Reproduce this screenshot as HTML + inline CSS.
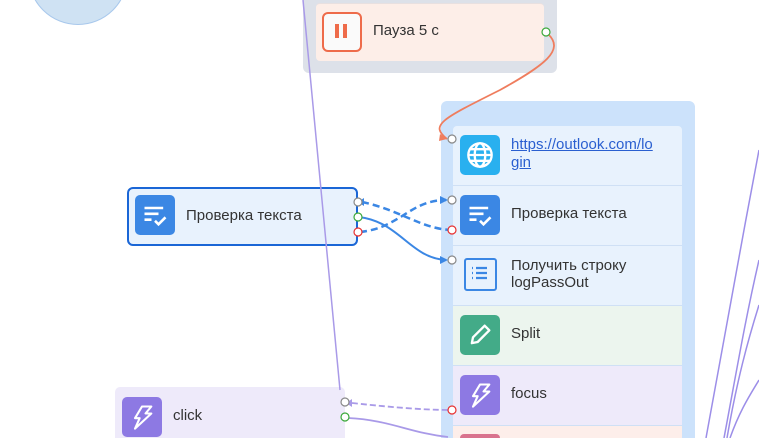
<!DOCTYPE html>
<html style="width:759px;height:438px;overflow:hidden"><head><meta charset="utf-8"><style>
html,body{margin:0;width:759px;height:438px;overflow:hidden}
body{background:#fff;font-family:"Liberation Sans","DejaVu Sans",sans-serif;position:relative}
.a{position:absolute}
.t{position:absolute;font-size:15px;color:#333}
.ic{position:absolute;width:40px;height:40px;border-radius:5px}
.row{position:absolute;left:453px;width:229px;height:59px;border-bottom:1px solid #cfe0f5}
</style></head><body>
<div class="a" style="left:28px;top:-75px;width:98px;height:98px;border-radius:50%;background:#cfe2f3;border:1px solid #a8c8ec"></div>

<div class="a" style="left:303px;top:0;width:254px;height:73px;border-radius:0 0 6px 6px;background:#dde1e9"></div>
<div class="a" style="left:316px;top:3px;width:228px;height:57px;border-radius:4px;background:#fdeee8;border-top:1px solid #e8e0e0"></div>
<div class="a" style="left:322px;top:12px;width:36px;height:36px;border:2px solid #ee6b4a;border-radius:6px;background:#fafafa"></div>
<div class="a" style="left:335px;top:24px;width:4px;height:14px;background:#ee6b4a"></div>
<div class="a" style="left:343px;top:24px;width:4px;height:14px;background:#ee6b4a"></div>
<div class="t" style="left:373px;top:22px">Пауза 5 с</div>

<div class="a" style="left:441px;top:101px;width:254px;height:337px;border-radius:6px 6px 0 0;background:#cce2fb"></div>
<div class="row" style="top:126px;background:#e8f2fd;border-radius:4px 4px 0 0"></div>
<div class="row" style="top:186px;background:#e8f2fd"></div>
<div class="row" style="top:246px;background:#e8f2fd"></div>
<div class="row" style="top:306px;background:#ecf5ee"></div>
<div class="row" style="top:366px;background:#eeeafa"></div>
<div class="row" style="top:426px;height:12px;border-bottom:0;background:#fdeeea"></div>

<div class="ic" style="left:460px;top:135px;background:#29b0ef"></div>
<svg class="a" style="left:466px;top:141px" width="28" height="28" viewBox="0 0 24 24" fill="none" stroke="#fff" stroke-width="2"><circle cx="12" cy="12" r="10"/><ellipse cx="12" cy="12" rx="4.5" ry="10"/><path d="M2 12h20M4 7h16M4 17h16"/></svg>
<div class="t" style="left:511px;top:136px;color:#2a5fd0;text-decoration:underline;line-height:18px">https://outlook.com/lo<br>gin</div>

<div class="ic" style="left:460px;top:195px;background:#3b87e4"></div>
<svg class="a" style="left:466px;top:201px" width="28" height="28" viewBox="0 0 24 24" fill="none" stroke="#fff" stroke-width="2.2"><path d="M3 6h16M3 11h12M3 16h6M12 17l3 3 6-6"/></svg>
<div class="t" style="left:511px;top:205px">Проверка текста</div>

<div class="a" style="left:464px;top:258px;width:29px;height:29px;border:2px solid #3b87e4;border-radius:3px"></div>
<svg class="a" style="left:468px;top:262px" width="24" height="24" viewBox="0 0 24 24" fill="none" stroke="#3b87e4" stroke-width="2.2"><path d="M4 6h1M4 11h1M4 16h1M8 6h11M8 11h11M8 16h11"/></svg>
<div class="t" style="left:511px;top:257px;line-height:17px">Получить строку<br>logPassOut</div>

<div class="ic" style="left:460px;top:315px;background:#43ab88"></div>
<svg class="a" style="left:466px;top:321px" width="28" height="28" viewBox="0 0 24 24" fill="none" stroke="#fff" stroke-width="2" stroke-linejoin="round"><path d="M5 19l1-5L16 4l4 4L10 18z"/></svg>
<div class="t" style="left:511px;top:325px">Split</div>

<div class="ic" style="left:460px;top:375px;background:#8d79e3"></div>
<svg class="a" style="left:466px;top:381px" width="28" height="28" viewBox="0 0 24 24" fill="none" stroke="#fff" stroke-width="1.8" stroke-linejoin="round"><path d="M12 3h8l-5 6h5L6 22l4-9H6z"/></svg>
<div class="t" style="left:511px;top:385px">focus</div>
<div class="a" style="left:460px;top:434px;width:40px;height:4px;border-radius:5px 5px 0 0;background:#d9738e"></div>

<div class="a" style="left:127px;top:187px;width:227px;height:55px;border:2px solid #1a66d6;border-radius:6px;background:#e8f2fd"></div>
<div class="ic" style="left:135px;top:195px;background:#3b87e4"></div>
<svg class="a" style="left:141px;top:201px" width="28" height="28" viewBox="0 0 24 24" fill="none" stroke="#fff" stroke-width="2.2"><path d="M3 6h16M3 11h12M3 16h6M12 17l3 3 6-6"/></svg>
<div class="t" style="left:186px;top:207px">Проверка текста</div>

<div class="a" style="left:115px;top:387px;width:230px;height:51px;border-radius:5px 5px 0 0;background:#eeeafa"></div>
<div class="ic" style="left:122px;top:397px;background:#8d79e3"></div>
<svg class="a" style="left:128px;top:403px" width="28" height="28" viewBox="0 0 24 24" fill="none" stroke="#fff" stroke-width="1.8" stroke-linejoin="round"><path d="M12 3h8l-5 6h5L6 22l4-9H6z"/></svg>
<div class="t" style="left:173px;top:407px">click</div>

<svg class="a" style="left:0;top:0" width="759" height="438" fill="none">
<path d="M303 0 L340 390" stroke="#a99ae8" stroke-width="1.5"/>
<path d="M706 438 C720 360 740 250 759 150 M724 438 C735 380 745 320 759 260 M727 438 C737 380 748 340 759 305 M730 438 C740 410 750 395 759 380" stroke="#9c8ee8" stroke-width="1.5"/>
<path d="M548 34 C565 50 545 65 500 90 C440 120 430 125 447 139" stroke="#ef7d5e" stroke-width="1.8"/>
<path d="M440 134 l7 5 -8 2z" fill="#ef7d5e"/>
<path d="M362 202 C400 210 420 228 450 230 M360 232 C400 228 410 200 446 200" stroke="#3b87e4" stroke-width="2.5" stroke-dasharray="7 4"/>
<path d="M359 217 C400 222 410 258 446 260" stroke="#3b87e4" stroke-width="2"/>
<path d="M440 196 l8 4 -8 4z M364 198 l-6 4 6 4z M440 256 l8 4 -8 4z" fill="#3b87e4"/>
<path d="M352 403 C380 406 420 410 450 410" stroke="#a99ae8" stroke-width="1.8" stroke-dasharray="6 3"/>
<path d="M352 399 l-6 4 6 4z" fill="#a99ae8"/>
<path d="M348 418 C390 420 410 433 448 437" stroke="#a99ae8" stroke-width="1.8"/>
<g stroke-width="1.2" fill="#fff">
<circle cx="546" cy="32" r="4" stroke="#3aa83a"/>
<circle cx="452" cy="139" r="4" stroke="#888"/>
<circle cx="452" cy="200" r="4" stroke="#888"/>
<circle cx="452" cy="230" r="4" stroke="#e83030"/>
<circle cx="452" cy="260" r="4" stroke="#888"/>
<circle cx="452" cy="410" r="4" stroke="#e83030"/>
<circle cx="358" cy="202" r="4" stroke="#888"/>
<circle cx="358" cy="217" r="4" stroke="#3aa83a"/>
<circle cx="358" cy="232" r="4" stroke="#e83030"/>
<circle cx="345" cy="402" r="4" stroke="#888"/>
<circle cx="345" cy="417" r="4" stroke="#3aa83a"/>
</g>
</svg>
</body></html>
